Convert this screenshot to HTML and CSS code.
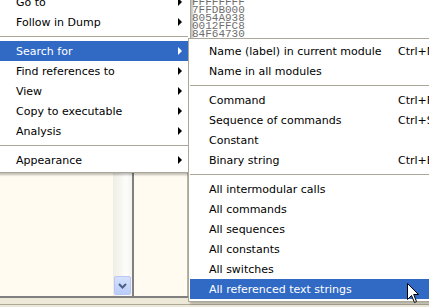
FILE: index.html
```html
<!DOCTYPE html>
<html lang="en">

<head>
    <meta charset="UTF-8">
    <title>Debugger - context menu</title>
    <link rel="stylesheet" href="styles.css">
</head>

<body>
    <div class="app">
        <div class="main">
            <div class="pane pane-left"></div>
            <div class="vscroll">
                <div class="scroll-btn">
                    <svg width="9" height="6" viewBox="0 0 9 6"><path d="M1 1 L4.5 4.5 L8 1" fill="none" stroke="#4d6185" stroke-width="2"/></svg>
                </div>
            </div>
            <div class="divider"></div>
            <div class="pane pane-mid"></div>
            <div class="dump">
                <div>FFFFFFFF</div>
                <div>7FFDB000</div>
                <div>8054A938</div>
                <div>0012FFC8</div>
                <div>84F64730</div>
            </div>
        </div>
        <div class="hbar"></div>
        <div class="status"></div>
    </div>

    <div class="menu menu-main">
        <div class="item">Go to<span class="arrow"></span></div>
        <div class="item">Follow in Dump<span class="arrow"></span></div>
        <div class="sep"></div>
        <div class="item active">Search for<span class="arrow"></span></div>
        <div class="item">Find references to<span class="arrow"></span></div>
        <div class="item">View<span class="arrow"></span></div>
        <div class="item">Copy to executable<span class="arrow"></span></div>
        <div class="item">Analysis<span class="arrow"></span></div>
        <div class="sep"></div>
        <div class="item">Appearance<span class="arrow"></span></div>
    </div>

    <div class="menu menu-sub">
        <div class="item"><span class="label">Name (label) in current module</span><span class="key">Ctrl+N</span></div>
        <div class="item"><span class="label">Name in all modules</span></div>
        <div class="sep"></div>
        <div class="item"><span class="label">Command</span><span class="key">Ctrl+F</span></div>
        <div class="item"><span class="label">Sequence of commands</span><span class="key">Ctrl+S</span></div>
        <div class="item"><span class="label">Constant</span></div>
        <div class="item"><span class="label">Binary string</span><span class="key">Ctrl+B</span></div>
        <div class="sep"></div>
        <div class="item"><span class="label">All intermodular calls</span></div>
        <div class="item"><span class="label">All commands</span></div>
        <div class="item"><span class="label">All sequences</span></div>
        <div class="item"><span class="label">All constants</span></div>
        <div class="item"><span class="label">All switches</span></div>
        <div class="item active"><span class="label">All referenced text strings</span></div>
    </div>

    <svg class="cursor" width="13" height="21" viewBox="0 0 13 21">
        <path d="M0.5 0.5 L0.5 16.5 L4.5 12.5 L7.5 19.5 L9.5 18.5 L6.7 11.5 L11.5 11.5 Z" fill="#fff" stroke="#000" stroke-width="1"/>
    </svg>
</body>

</html>
```

FILE: styles.css
```css
body {
    margin: 0;
    width: 429px;
    height: 307px;
    overflow: hidden;
    position: relative;
    font-family: "DejaVu Sans", Verdana, sans-serif;
    font-size: 11px;
    color: #000;
    background: #ece9d8;
}

.app {
    display: flex;
    flex-direction: column;
    height: 307px;
}

.main {
    display: flex;
    height: 296px;
}

.pane {
    background: #fffbf0;
}

.pane-left {
    width: 113px;
}

.vscroll {
    width: 19px;
    background: linear-gradient(to right, #eeede5, #fdfdfa 70%, #f4f3ee);
    display: flex;
    flex-direction: column;
    justify-content: flex-end;
    padding-bottom: 1px;
    box-sizing: border-box;
}

.scroll-btn {
    height: 17px;
    margin: 0 1px 0 1px;
    border: 1px solid #b8c8f2;
    border-radius: 2px;
    background: linear-gradient(to bottom, #d6e1fd, #b9cdfa);
    display: flex;
    align-items: center;
    justify-content: center;
}

.divider {
    width: 2px;
    background: #808080;
}

.pane-mid {
    width: 53px;
}

.dump {
    flex: 1;
    background: #fff;
    border-left: 3px solid #b8b4a4;
    padding-left: 2px;
    margin-top: -2px;
    font-family: "Liberation Mono", monospace;
    font-size: 11px;
    line-height: 8px;
    color: #6e6e6e;
}

.hbar {
    height: 2px;
    background: #808080;
}

.status {
    flex: 1;
    background: #ece9d8;
    border-top: 3px solid #ece9d8;
    box-shadow: inset 0 3px 0 #ece9d8, inset 0 4px 0 #aca899;
}

.menu {
    position: absolute;
    background: #fff;
    border: 1px solid #aca899;
    padding: 2px;
    box-shadow: 2px 2px 2px rgba(0, 0, 0, 0.25);
}

.menu-main {
    left: -3px;
    top: -11px;
    width: 188px;
}

.menu-sub {
    left: 188px;
    top: 38px;
    width: 260px;
    padding: 2px 1px;
}

.item {
    height: 20px;
    display: flex;
    align-items: center;
    padding-left: 16px;
    position: relative;
}

.menu-sub .item {
    padding-left: 19px;
}

.item.active {
    background: #316ac5;
    color: #fff;
}

.label {
    width: 189px;
    white-space: nowrap;
}

.key {
    white-space: nowrap;
}

.arrow {
    position: absolute;
    left: 178px;
    top: 6px;
    border-left: 4px solid #000;
    border-top: 4px solid transparent;
    border-bottom: 4px solid transparent;
}

.active .arrow {
    border-left-color: #fff;
}

.sep {
    height: 9px;
    display: flex;
    align-items: center;
}

.sep::before {
    content: "";
    flex: 1;
    height: 1px;
    background: #aca899;
}

.cursor {
    position: absolute;
    left: 407px;
    top: 283px;
}
```
